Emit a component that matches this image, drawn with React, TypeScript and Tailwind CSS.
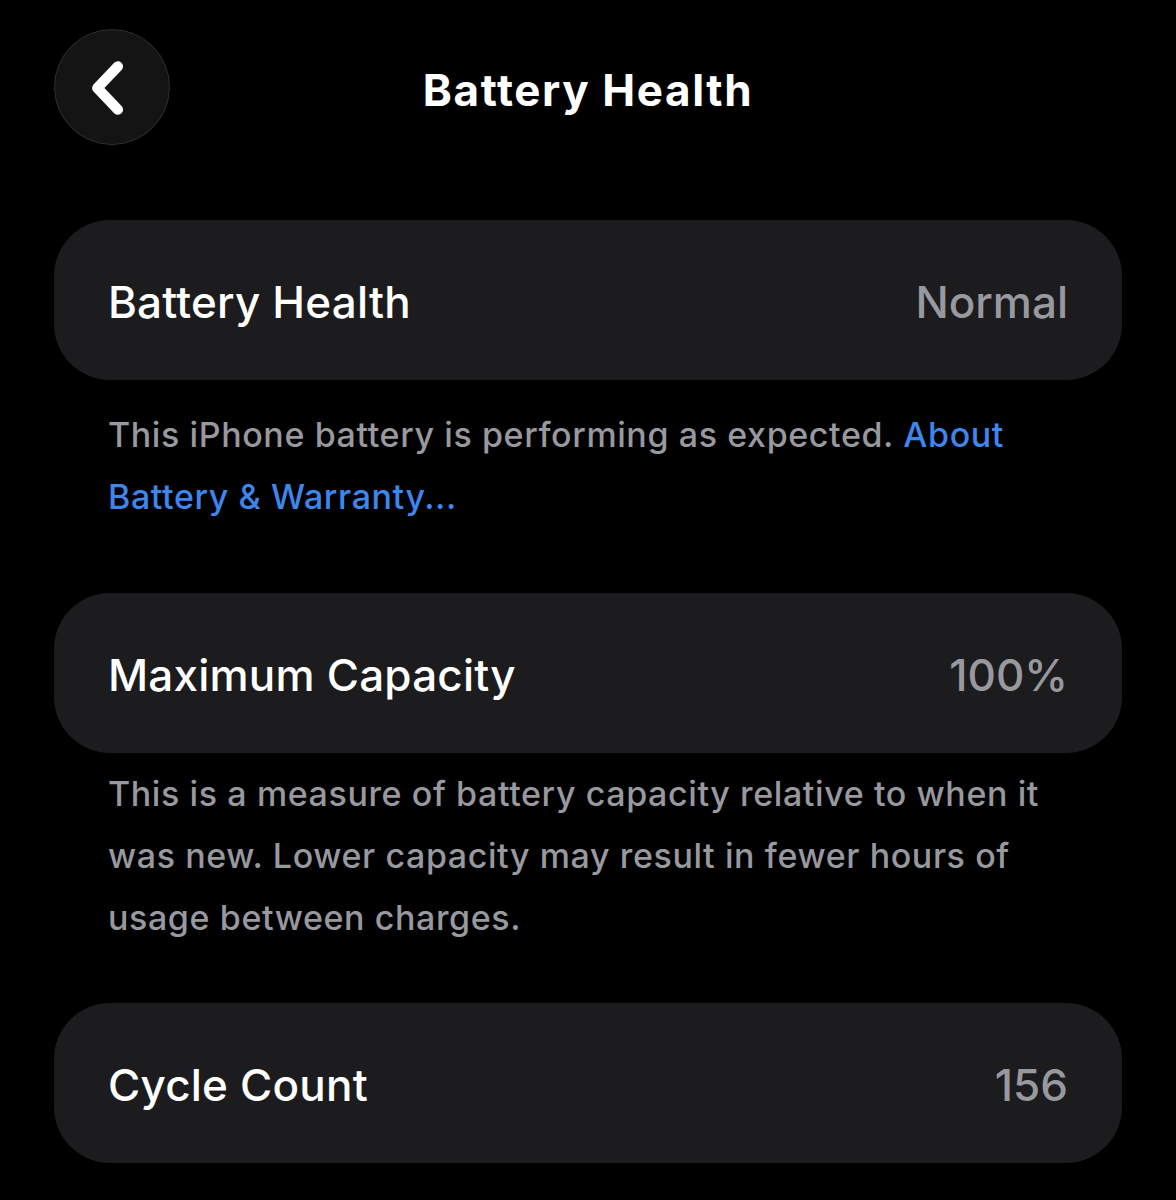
import React from "react";

type RowProps = { label: string; value: string };

function InfoRow({ label, value }: RowProps) {
  return (
    <div className="flex h-[160px] items-center justify-between rounded-[56px] bg-[#1c1c1e] px-[54px] pt-[3px]">
      <span className="text-[44px] font-medium leading-none tracking-[0.2px] text-white">{label}</span>
      <span className="text-[44px] font-medium leading-none text-[#98989f]">{value}</span>
    </div>
  );
}

function BackButton() {
  return (
    <button className="flex h-[116px] w-[116px] items-center justify-center rounded-full border-[1.5px] border-[#2e2e2e] bg-[#141414]">
      <svg width="116" height="116" viewBox="0 0 116 116" fill="none">
        <path
          d="M64 37 L43 59 L64 81"
          stroke="#ffffff"
          strokeWidth="10.5"
          strokeLinecap="round"
          strokeLinejoin="round"
        />
      </svg>
    </button>
  );
}

export default function App() {
  return (
    <div
      className="min-h-[1200px] w-full bg-black text-white"
      style={{ fontFamily: "Inter, 'Noto Sans', sans-serif" }}
    >
      {/* navigation bar */}
      <div className="relative flex h-[176px] items-start px-[54px] pt-[29px]">
        <BackButton />
        <h1 className="absolute left-0 right-0 top-[64px] text-center text-[44px] font-bold leading-[52px] tracking-[1.6px] text-white">
          Battery Health
        </h1>
      </div>

      <div className="px-[54px] pt-[44px]">
        <InfoRow label="Battery Health" value="Normal" />
        <p className="mt-[24px] px-[54px] text-[34px] font-medium leading-[62px] tracking-[0.6px] text-[#98989f]">
          This iPhone battery is performing as expected.{" "}
          <span className="text-[#3d86ee]">About Battery &amp; Warranty...</span>
        </p>

        <div className="mt-[65px]">
          <InfoRow label="Maximum Capacity" value="100%" />
        </div>
        <p className="mt-[10px] px-[54px] text-[34px] font-medium leading-[62px] tracking-[0.6px] text-[#98989f]">
          This is a measure of battery capacity relative to when it was new. Lower capacity may
          result in fewer hours of usage between charges.
        </p>

        <div className="mt-[54px]">
          <InfoRow label="Cycle Count" value="156" />
        </div>
      </div>
    </div>
  );
}
